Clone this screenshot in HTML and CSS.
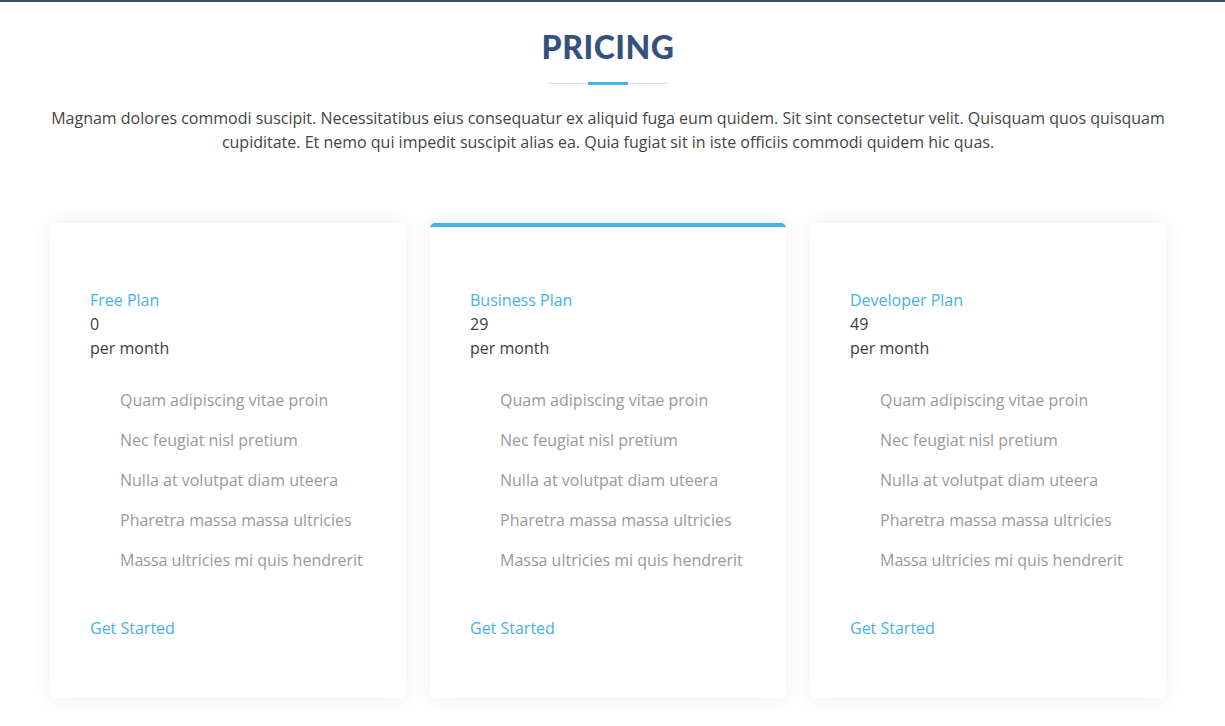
FILE: index.html
```html
<!DOCTYPE html>
<html lang="en">
<head>
<meta charset="utf-8">
<title>Pricing</title>
<link rel="stylesheet" href="styles.css">
</head>
<body>
<section class="pricing">
  <div class="section-title">
    <h2>PRICING</h2>
    <div class="divider"><span></span></div>
    <p>Magnam dolores commodi suscipit. Necessitatibus eius consequatur ex aliquid fuga eum quidem. Sit sint consectetur velit. Quisquam quos quisquam cupiditate. Et nemo qui impedit suscipit alias ea. Quia fugiat sit in iste officiis commodi quidem hic quas.</p>
  </div>
  <div class="cards">
    <div class="card">
      <h3>Free Plan</h3>
      <div class="price">0</div>
      <div class="period">per month</div>
      <ul>
        <li>Quam adipiscing vitae proin</li>
        <li>Nec feugiat nisl pretium</li>
        <li>Nulla at volutpat diam uteera</li>
        <li>Pharetra massa massa ultricies</li>
        <li>Massa ultricies mi quis hendrerit</li>
      </ul>
      <a class="btn" href="#">Get Started</a>
    </div>
    <div class="card featured">
      <h3>Business Plan</h3>
      <div class="price">29</div>
      <div class="period">per month</div>
      <ul>
        <li>Quam adipiscing vitae proin</li>
        <li>Nec feugiat nisl pretium</li>
        <li>Nulla at volutpat diam uteera</li>
        <li>Pharetra massa massa ultricies</li>
        <li>Massa ultricies mi quis hendrerit</li>
      </ul>
      <a class="btn" href="#">Get Started</a>
    </div>
    <div class="card">
      <h3>Developer Plan</h3>
      <div class="price">49</div>
      <div class="period">per month</div>
      <ul>
        <li>Quam adipiscing vitae proin</li>
        <li>Nec feugiat nisl pretium</li>
        <li>Nulla at volutpat diam uteera</li>
        <li>Pharetra massa massa ultricies</li>
        <li>Massa ultricies mi quis hendrerit</li>
      </ul>
      <a class="btn" href="#">Get Started</a>
    </div>
  </div>
</section>
</body>
</html>
```
FILE: styles.css
```css
* { box-sizing: border-box; }
html, body { margin: 0; padding: 0; }
body {
  font-family: "Open Sans", "Liberation Sans", sans-serif;
  color: #444;
  background: #fff;
  border-top: 2px solid #3a4a6a;
}
.pricing { padding: 0 59px 40px 50px; }
.section-title { text-align: center; padding-top: 27px; }
.section-title h2 {
  margin: 0;
  font-family: "Lato", "Open Sans", sans-serif;
  font-weight: 900;
  font-size: 32px;
  line-height: 36px;
  color: #37517e;
  letter-spacing: 0.5px;
}
.divider {
  width: 120px;
  height: 1px;
  background: #ddd;
  margin: 18px auto 0;
  position: relative;
}
.divider span {
  position: absolute;
  left: 40px;
  top: -1px;
  width: 40px;
  height: 3px;
  background: #47b2e4;
}
.section-title p {
  margin: 22px 0 0;
  font-size: 16px;
  line-height: 24px;
  color: #444;
}
.cards {
  display: grid;
  grid-template-columns: repeat(3, 356px);
  gap: 24px;
  margin-top: 69px;
}
.card {
  background: #fff;
  border-radius: 5px;
  border-top: 4px solid #fff;
  box-shadow: 0 0 20px rgba(0, 0, 0, 0.08);
  padding: 61px 40px 58px;
  font-size: 16px;
  line-height: 24px;
}
.card.featured { border-top-color: #47b2e4; }
.card h3 {
  margin: 0;
  font-size: 16px;
  line-height: 24px;
  font-weight: 500;
  color: #47b2e4;
}
.price, .period { color: #37414b; }
.card ul {
  list-style: none;
  margin: 20px 0 0;
  padding: 0 0 0 30px;
}
.card li {
  padding: 8px 0;
  color: #999;
}
.btn {
  display: inline-block;
  margin-top: 36px;
  color: #47b2e4;
  text-decoration: none;
  font-weight: 500;
}
```
